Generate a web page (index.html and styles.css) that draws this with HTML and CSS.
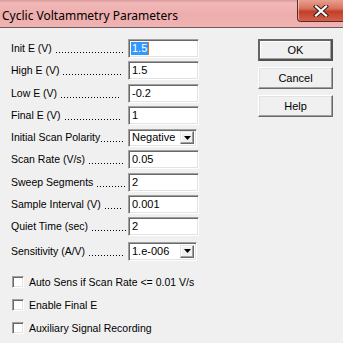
FILE: index.html
```html
<!DOCTYPE html>
<html>
<head>
<meta charset="utf-8">
<link rel="stylesheet" href="styles.css">
</head>
<body>
<div class="window">
  <div class="titlebar">
    <span class="title">Cyclic Voltammetry Parameters</span>
    <span class="close"><svg width="16" height="12" viewBox="0 0 16 12"><path d="M3 1.5 L13 10.5 M13 1.5 L3 10.5" stroke="#3a2020" stroke-width="4.2" stroke-linecap="square"/><path d="M3 1.5 L13 10.5 M13 1.5 L3 10.5" stroke="#fff" stroke-width="2.2" stroke-linecap="square"/></svg></span>
  </div>
  <div class="content">
    <div class="form">
      <div class="row"><span class="label"><span class="lt">Init E (V)</span><span class="lead"></span></span><span class="input"><span class="sel">1.5</span><span class="caret"></span></span></div>
      <div class="row"><span class="label"><span class="lt">High E (V)</span><span class="lead"></span></span><span class="input">1.5</span></div>
      <div class="row"><span class="label"><span class="lt">Low E (V)</span><span class="lead short"></span></span><span class="input">-0.2</span></div>
      <div class="row"><span class="label"><span class="lt">Final E (V)</span><span class="lead short"></span></span><span class="input">1</span></div>
      <div class="row"><span class="label"><span class="lt">Initial Scan Polarity</span><span class="lead tight"></span></span><span class="select short"><span class="val">Negative</span><span class="drop"><svg width="7" height="4" viewBox="0 0 7 4"><path d="M0 0 H7 L3.5 4 Z" fill="#000"/></svg></span></span></div>
      <div class="row"><span class="label"><span class="lt">Scan Rate (V/s)</span><span class="lead"></span></span><span class="input">0.05</span></div>
      <div class="row"><span class="label"><span class="lt">Sweep Segments</span><span class="lead long"></span></span><span class="input">2</span></div>
      <div class="row"><span class="label"><span class="lt">Sample Interval (V)</span><span class="lead"></span></span><span class="input">0.001</span></div>
      <div class="row"><span class="label"><span class="lt">Quiet Time (sec)</span><span class="lead long"></span></span><span class="input">2</span></div>
      <div class="row last"><span class="label"><span class="lt">Sensitivity (A/V)</span><span class="lead"></span></span><span class="select"><span class="val">1.e-006</span><span class="drop"><svg width="7" height="4" viewBox="0 0 7 4"><path d="M0 0 H7 L3.5 4 Z" fill="#000"/></svg></span></span></div>
      <div class="checks">
        <div class="check"><span class="box"></span><span>Auto Sens if Scan Rate &lt;= 0.01 V/s</span></div>
        <div class="check"><span class="box"></span><span>Enable Final E</span></div>
        <div class="check"><span class="box"></span><span>Auxiliary Signal Recording</span></div>
      </div>
    </div>
    <div class="buttons">
      <div class="btn default">OK</div>
      <div class="btn">Cancel</div>
      <div class="btn">Help</div>
    </div>
  </div>
</div>
</body>
</html>
```
FILE: styles.css
```css
* { box-sizing: border-box; }
html, body { margin: 0; padding: 0; }
body { width: 343px; height: 343px; overflow: hidden; background: #f0f0f0; }
.window {
  width: 343px; height: 343px; background: #f0f0f0;
  font-family: "Liberation Sans", Arial, sans-serif; font-size: 10.5px; color: #000;
}
.titlebar {
  height: 28px;
  display: flex; align-items: flex-start;
  background: linear-gradient(180deg, #d99a9a 0px, #f2b8b8 3px, #eeadad 14px, #f0b2b2 26px);
  border-bottom: 1px solid #6a5a5a;
}
.title {
  font-family: "Noto Sans", sans-serif; font-size: 12px;
  padding: 8px 0 0 2px; line-height: 16px; color: #000;
}
.close {
  margin-left: auto;
  width: 46px; height: 22px;
  border: 1px solid #5a2a24; border-top: none; border-right: none;
  border-radius: 0 0 0 4px;
  background: linear-gradient(180deg, #e9a08f 0%, #d9735e 40%, #c33f29 55%, #d2604a 100%);
  box-shadow: inset 1px 0 rgba(255,255,255,0.45);
  display: flex; align-items: center; justify-content: center;
  padding-left: 1px;
}
.content { display: flex; padding: 11px 0 0 11px; }
.form { width: 200px; display: flex; flex-direction: column; gap: 3.3px; }
.row { display: flex; align-items: center; height: 19px; }
.row.last { margin-top: 2px; }
.label { width: 117px; height: 19px; display: flex; align-items: flex-start; }
.lt { line-height: 19px; white-space: nowrap; }
.lead {
  flex: 1; height: 1px; margin: 13px 5px 0 4px;
  background: repeating-linear-gradient(90deg, #000 0 1px, transparent 1px 3px);
}
.lead.short { margin-right: 8px; }
.lead.long { margin-right: 1px; }
.lead.tight { margin-left: 1px; margin-right: 3px; }
.input {
  width: 71px; height: 19px; background: #fff;
  border: 1px solid; border-color: #a0a0a0 #fff #fff #a0a0a0;
  box-shadow: inset 1px 1px #696969, inset -1px -1px #e3e3e3;
  padding: 2px 0 0 3px; font-size: 11px; line-height: 13px;
  display: flex; align-items: flex-start;
}
.sel { background: #3399ff; color: #fff; padding: 0 1px; margin-left: -1px; height: 13px; line-height: 13px; }
.caret { width: 1px; height: 13px; background: #e07020; }
.select {
  width: 69px; height: 19px; background: #fff;
  border: 1px solid; border-color: #a0a0a0 #fff #fff #a0a0a0;
  box-shadow: inset 1px 1px #696969, inset -1px -1px #e3e3e3;
  padding: 2px 2px 2px 3px; font-size: 11px; line-height: 13px;
  display: flex; align-items: center;
}
.select.short { height: 18px; }
.select .val { flex: 1; white-space: nowrap; }
.drop {
  width: 14px; height: 13px; flex: none; background: #f0f0f0;
  border: 1px solid; border-color: #e3e3e3 #696969 #696969 #e3e3e3;
  box-shadow: inset -1px -1px #a0a0a0, inset 1px 1px #fff;
  display: flex; align-items: center; justify-content: center;
}
.checks { display: flex; flex-direction: column; gap: 10px; margin-top: 12px; padding-left: 1px; }
.check { display: flex; align-items: center; height: 13px; white-space: nowrap; }
.box {
  width: 12px; height: 12px; margin-right: 5px; background: #fff; flex: none;
  border: 1px solid; border-color: #a0a0a0 #fff #fff #a0a0a0;
  box-shadow: inset 1px 1px #696969, inset -1px -1px #e3e3e3;
}
.buttons { margin-left: 47px; display: flex; flex-direction: column; gap: 6px; }
.btn {
  width: 75px; height: 22px; background: #f0f0f0;
  border: 1px solid; border-color: #fff #696969 #696969 #fff;
  box-shadow: inset -1px -1px #a0a0a0, inset 1px 1px #e3e3e3;
  display: flex; align-items: center; justify-content: center;
  font-size: 11px;
}
.btn.default { border: 2px solid; border-color: #646464 #505050 #505050 #646464; box-shadow: inset -1px -1px #a0a0a0, inset 1px 1px #fff; }
```
